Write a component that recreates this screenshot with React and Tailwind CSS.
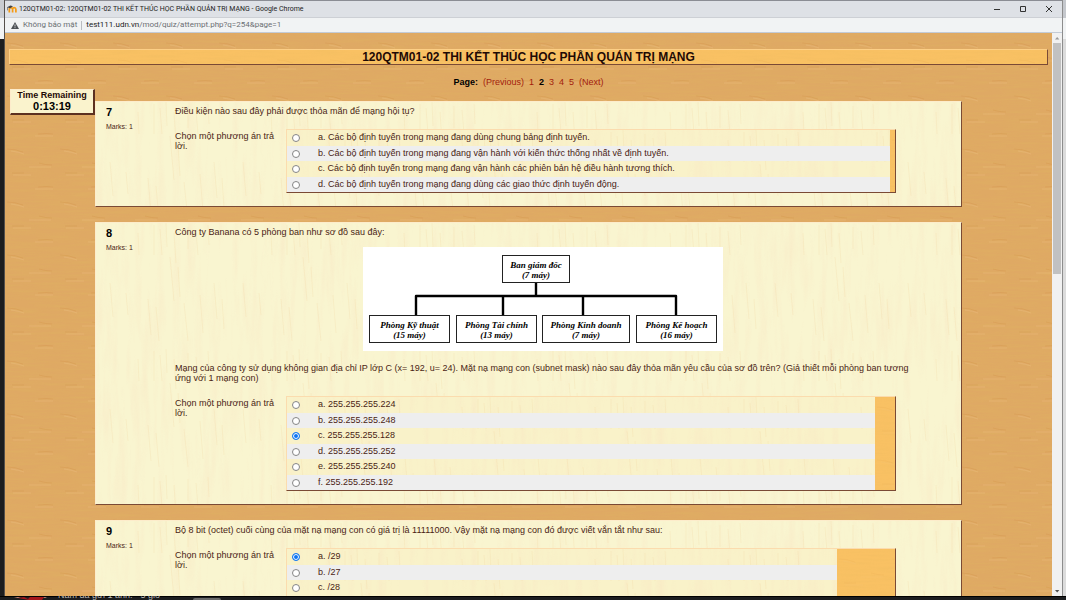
import React from "react";

const quizTitle = "120QTM01-02 THI KẾT THÚC HỌC PHẦN QUẢN TRỊ MẠNG";

const questions = [
  {
    number: 7,
    text: "Điều kiện nào sau đây phải được thỏa mãn để mạng hội tụ?",
    filler: "w-[5px]",
    answers: [
      "a. Các bộ định tuyến trong mạng đang dùng chung bảng định tuyến.",
      "b. Các bộ định tuyến trong mạng đang vận hành với kiến thức thống nhất về định tuyến.",
      "c. Các bộ định tuyến trong mạng đang vận hành các phiên bản hệ điều hành tương thích.",
      "d. Các bộ định tuyến trong mạng đang dùng các giao thức định tuyến động.",
    ],
  },
  {
    number: 8,
    text: "Công ty Banana có 5 phòng ban như sơ đồ sau đây:",
    diagram: true,
    extra:
      "Mạng của công ty sử dụng không gian địa chỉ IP lớp C (x= 192, u= 24). Mặt nạ mạng con (subnet mask) nào sau đây thỏa mãn yêu cầu của sơ đồ trên? (Giả thiết mỗi phòng ban tương ứng với 1 mạng con)",
    filler: "w-5",
    selected: 2,
    answers: [
      "a. 255.255.255.224",
      "b. 255.255.255.248",
      "c. 255.255.255.128",
      "d. 255.255.255.252",
      "e. 255.255.255.240",
      "f. 255.255.255.192",
    ],
  },
  {
    number: 9,
    text: "Bộ 8 bit (octet) cuối cùng của mặt nạ mạng con có giá trị là 11111000. Vậy mặt nạ mạng con đó được viết vắn tắt như sau:",
    filler: "w-[58px]",
    selected: 0,
    answers: ["a. /29", "b. /27", "c. /28"],
  },
];

function TextureDefs() {
  return (
    <svg className="absolute size-0" aria-hidden="true">
      <defs>
        <filter id="wood-grain" x="0" y="0" width="100%" height="100%">
          <feTurbulence type="fractalNoise" baseFrequency="0.03 0.5" numOctaves="3" seed="4" />
          <feColorMatrix values="0 0 0 0 0.74  0 0 0 0 0.46  0 0 0 0 0.12  1.4 0 0 0 -0.5" />
        </filter>
        <filter id="maple-grain" x="0" y="0" width="100%" height="100%">
          <feTurbulence type="fractalNoise" baseFrequency="0.13 0.014" numOctaves="3" seed="9" />
          <feColorMatrix values="0 0 0 0 0.94  0 0 0 0 0.78  0 0 0 0 0.54  2 0 0 0 -0.88" />
        </filter>
        <pattern id="wood-knots" width="53" height="53" patternUnits="userSpaceOnUse">
          <g fill="none" stroke="#c98436" strokeWidth=".7" opacity="0.3">
            <path d="M2 10q8 0 16 3M34 24q6 2 13 2M7 34h12M33 48q9-1 15 0" />
          </g>
          <g fill="none" stroke="#efc48a" strokeWidth=".7" opacity="0.45">
            <path d="M6 12q8 1 13 3M24 28h22M8 36h18M30 50h18" />
          </g>
        </pattern>
        <pattern id="maple-streaks" width="133" height="126" patternUnits="userSpaceOnUse">
          <g fill="none" stroke="#f1cf98" strokeWidth="1" opacity="0.2">
            <path d="M58 2v30M64 6l2 26M70 0l1 24M78 10l2 30M92 4v22M100 8l2 24M112 2l1 20M14 60l3 34M30 70l2 22M52 76l3 36M60 84l3 34M74 34l4 44M82 44l2 30M88 80l4 38M104 72l3 38M118 60l3 36M126 76l2 30M42 10l1 22" />
          </g>
        </pattern>
      </defs>
    </svg>
  );
}

function WoodTexture({ faint }) {
  return (
    <svg className={`pointer-events-none absolute inset-0 size-full ${faint ? "opacity-40" : ""}`} aria-hidden="true">
      <rect width="100%" height="100%" filter="url(#wood-grain)" opacity="0.5" />
      <rect width="100%" height="100%" fill="url(#wood-knots)" />
    </svg>
  );
}

function MapleTexture() {
  return (
    <svg className="pointer-events-none absolute inset-0 size-full" aria-hidden="true">
      <rect width="100%" height="100%" filter="url(#maple-grain)" opacity="0.45" />
      <rect width="100%" height="100%" fill="url(#maple-streaks)" />
    </svg>
  );
}

function DiagramNode({ x, y, width, name, count }) {
  return (
    <g>
      <rect x={x} y={y} width={width} height="27" fill="#fff" stroke="#222" />
      <text x={x + width / 2} y={y + 12} textAnchor="middle">{name}</text>
      <text x={x + width / 2} y={y + 22} textAnchor="middle">{count}</text>
    </g>
  );
}

function CompanyDiagram() {
  return (
    <svg
      viewBox="0 0 360 104"
      className="mx-auto mt-[10px] h-[104px] w-[360px] bg-white font-['Liberation_Serif',serif] text-[9px] font-bold italic"
      role="img"
    >
      <path d="M173 35v14M53 69V49H313V69M140 49v20M220 49v20" fill="none" stroke="#000" strokeWidth="2.4" strokeLinejoin="round" />
      <DiagramNode x={139.5} y={8.5} width={67} name="Ban giám đốc" count="(7 máy)" />
      <DiagramNode x={6.5} y={68.5} width={80} name="Phòng Kỹ thuật" count="(15 máy)" />
      <DiagramNode x={93.5} y={68.5} width={80} name="Phòng Tài chính" count="(13 máy)" />
      <DiagramNode x={179.5} y={68.5} width={87} name="Phòng Kinh doanh" count="(7 máy)" />
      <DiagramNode x={273.5} y={68.5} width={80} name="Phòng Kế hoạch" count="(16 máy)" />
    </svg>
  );
}

function AnswerTable({ question }) {
  return (
    <div className="flex flex-1 border border-t-[#fbdcae] border-r-[#7a4a35] border-b-[#7a4a35] border-l-[#fbdcae] bg-[#f9c163]">
      <div className="relative flex-1 bg-[#f9f2c9]">
        <MapleTexture />
        <table className="relative w-full border-collapse">
          <tbody>
            {question.answers.map((answer, index) => {
              const id = `q${question.number}-${index}`;
              return (
                <tr key={id} className="odd:h-4 even:h-[15px] even:bg-[#eeeeee]">
                  <td className="w-[31px] p-0 pl-[5px]">
                    <input
                      id={id}
                      type="radio"
                      name={`q${question.number}`}
                      defaultChecked={question.selected === index}
                      className="block size-2 appearance-none rounded-full border border-[#858585] bg-white checked:border-[#1a7df0] checked:bg-[#0d75f5] checked:shadow-[inset_0_0_0_1px_white]"
                    />
                  </td>
                  <td className="p-0 align-top leading-[14px]">
                    <label htmlFor={id} className="block">{answer}</label>
                  </td>
                </tr>
              );
            })}
          </tbody>
        </table>
      </div>
      <div className={`relative shrink-0 overflow-hidden ${question.filler}`}>
        <WoodTexture faint />
      </div>
    </div>
  );
}

function Question({ question }) {
  return (
    <section className="relative flex border border-t-[#fdeccb] border-r-[#7a4a35] border-b-[#7a4a35] border-l-[#fdeccb] bg-[#f9f5d0] pb-[13px]">
      <MapleTexture />
      <div className="relative w-[79px] shrink-0 pt-[3px] pl-[10px]">
        <h2 className="text-[11px] leading-[14px] font-bold text-black">{question.number}</h2>
        <p className="mt-1 text-[7px] leading-[8px]">Marks: 1</p>
      </div>
      <div className="relative min-w-0 flex-1 pt-1 pr-[50px]">
        <p className="leading-[10px]">{question.text}</p>
        {question.diagram && <CompanyDiagram />}
        {question.extra && <p className="mt-3 leading-[10px]">{question.extra}</p>}
        <div className="mt-[13px] mr-[15px] flex">
          <p className="w-[111px] shrink-0 pt-[2px] pr-2 leading-[10px]">Chọn một phương án trả lời.</p>
          <AnswerTable question={question} />
        </div>
      </div>
    </section>
  );
}

function TitleBar() {
  return (
    <header className="flex h-[17px] shrink-0 items-center border-t border-[#8b8d94] bg-[#dee1e6] font-[Roboto,'Noto_Sans',sans-serif] text-[7px] text-[#222]">
      <svg className="ml-[2px] h-2 w-[10px]" viewBox="0 0 10 8" fill="none" aria-hidden="true">
        <path d="M2.3 7.6V4.4Q2.3 2.7 3.9 2.7T5.6 4.4V7.6M5.6 4.4Q5.6 2.7 7.2 2.7T8.9 4.4V7.6" stroke="#f59a13" strokeWidth="1.7" />
        <path d="M0 2.2 3.5.5 6 1.2 3.2 3.2Z" fill="#444" />
        <path d="M.5 2v3.4" stroke="#666" strokeWidth=".7" />
      </svg>
      <h1 className="ml-[2px] truncate">120QTM01-02: {quizTitle} - Google Chrome</h1>
      <div className="mr-[9px] ml-auto flex gap-[18px]">
        <button aria-label="Minimize" className="block">
          <svg className="size-2" viewBox="0 0 8 8" stroke="#333" aria-hidden="true"><path d="M1 4.5h6" /></svg>
        </button>
        <button aria-label="Maximize" className="block">
          <svg className="size-2" viewBox="0 0 8 8" stroke="#333" fill="none" aria-hidden="true"><path d="M1.5 1.5h5v5h-5z" /></svg>
        </button>
        <button aria-label="Close" className="block">
          <svg className="size-2" viewBox="0 0 8 8" stroke="#333" aria-hidden="true"><path d="m1 1 6 6M7 1 1 7" /></svg>
        </button>
      </div>
    </header>
  );
}

function AddressBar() {
  return (
    <div className="flex h-4 shrink-0 items-center border-t border-b border-t-[#cdd0d5] border-b-[#c3cbd6] bg-[#f1f3f4] font-[Roboto,'Noto_Sans',sans-serif] text-[8px] text-[#6b6f73]">
      <svg className="ml-[6px] h-[7px] w-2" viewBox="0 0 8 7" aria-hidden="true">
        <path d="M4 0 8 7H0Z" fill="#4d5156" />
        <path d="M4 2.4v2.1M4 5.2v.9" stroke="#f1f3f4" strokeWidth=".8" />
      </svg>
      <span className="ml-1">Không bảo mật</span>
      <span className="mx-1 h-[9px] w-px bg-[#b9bcc0]" />
      <span><span className="text-[#222]">test111.udn.vn</span>/mod/quiz/attempt.php?q=254&amp;page=1</span>
    </div>
  );
}

function PageLinks() {
  const link = "text-[#a31c0c]";
  return (
    <nav className="mt-3 flex justify-center gap-[5px] leading-[10px]">
      <span className="font-bold text-black">Page:</span>
      <a href="#previous" className={link}>(Previous)</a>
      <a href="#1" className={link}>1</a>
      <span className="font-bold text-black">2</span>
      <a href="#3" className={link}>3</a>
      <a href="#4" className={link}>4</a>
      <a href="#5" className={link}>5</a>
      <a href="#next" className={link}>(Next)</a>
    </nav>
  );
}

function Scrollbar() {
  return (
    <div className="flex w-[10px] shrink-0 flex-col items-center bg-[#f1f1f1]">
      <svg className="h-[10px] w-2 shrink-0" viewBox="0 0 8 10" aria-hidden="true"><path d="M2 6.5 4.2 4 6.4 6.5Z" fill="#9a9a9a" /></svg>
      <div className="h-[41%] w-2 bg-[#c1c1c1]" />
      <svg className="mt-auto h-[10px] w-2 shrink-0" viewBox="0 0 8 10" aria-hidden="true"><path d="M2 4 4.2 6.5 6.4 4Z" fill="#505050" /></svg>
    </div>
  );
}

export default function App() {
  return (
    <div className="relative flex h-screen flex-col overflow-hidden bg-[#1c1d1f] font-['Liberation_Sans',Arial,sans-serif] text-[9px] text-[#4a1d14]">
      <TextureDefs />
      <div className="relative z-10 flex min-h-0 flex-1">
        <div className="flex w-[5px] shrink-0 flex-col border-r border-[#55504c] bg-[#1c1d1f]">
          <div className="h-[18px] bg-[#c9ccd1]" />
          <div className="h-[21px] bg-[#f1f3f4]" />
        </div>
        <div className="flex min-w-0 flex-1 flex-col">
          <TitleBar />
          <AddressBar />
          <div className="flex min-h-0 flex-1">
            <main className="relative min-w-0 flex-1 overflow-hidden bg-[#dfa964]">
              <WoodTexture />
              <div className="relative mx-1 mt-4 overflow-hidden border border-t-[#fdcf86] border-r-[#7a4a35] border-b-[#7a4a35] border-l-[#fdcf86] bg-[#f9c163]">
                <WoodTexture faint />
                <h2 className="relative text-center text-[12px] leading-[14px] font-bold text-[#1f0a05]">{quizTitle}</h2>
              </div>
              <div className="relative">
                <PageLinks />
              </div>
              <aside className="absolute top-14 left-[5px] w-[85px] border border-t-[#fdeccb] border-r-2 border-r-[#5c3020] border-b-2 border-b-[#5c3020] border-l-[#fdeccb] bg-[#faf3cd] text-center font-bold text-[#1f0a05]">
                <p className="leading-[10px]">Time Remaining</p>
                <p className="text-[11px] leading-[13px] text-black">0:13:19</p>
              </aside>
              <div className="relative mx-[90px] mt-[14px] flex flex-col gap-[15px]">
                {questions.map((question) => (
                  <Question key={question.number} question={question} />
                ))}
              </div>
            </main>
            <Scrollbar />
          </div>
        </div>
        <div className="flex w-1 shrink-0 flex-col border-l border-[#8d8d8d] bg-[#dcdcdc]">
          <div className="h-[18px] bg-[#c5c8cd]" />
          <div className="h-[21px] bg-[#f1f3f4]" />
        </div>
      </div>
      <footer className="flex h-1 shrink-0 items-end border-t border-black text-[#b5b5b5]">
        <svg className="ml-3 h-[3px] w-9 shrink-0" viewBox="0 0 36 3" aria-hidden="true">
          <path d="M2 0h7l-3 1ZM30 0h5l-2 1Z" fill="#c98a78" />
          <path d="M6 1l6-1h20l-2 3H17Z" fill="#a3151b" />
          <path d="M12 0h6l-2 2Z" fill="#1c1d1f" />
        </svg>
        <p className="ml-[10px] leading-[10px] whitespace-nowrap">Nam đã gửi 1 ảnh. · 5 giờ</p>
        <span className="ml-8 h-[2px] w-7 rounded-t bg-[#6a6a6a]" />
      </footer>
    </div>
  );
}
